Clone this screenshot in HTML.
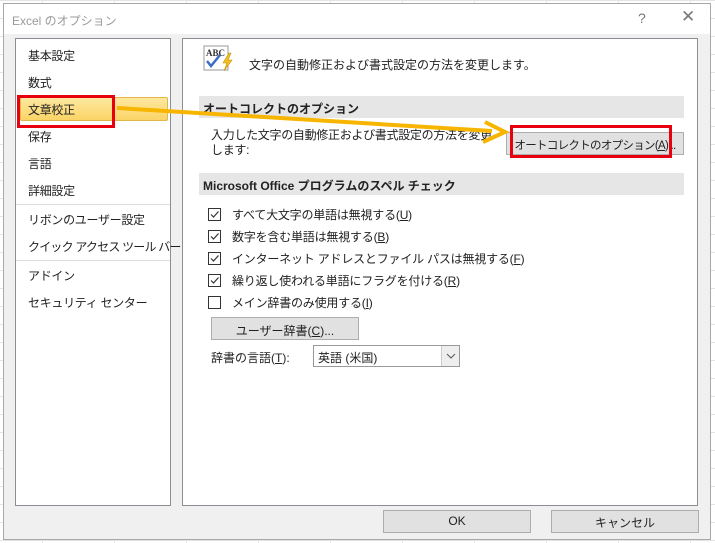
<!DOCTYPE html>
<html><head><meta charset="utf-8"><style>
*{box-sizing:border-box;margin:0;padding:0}
body{width:715px;height:543px;overflow:hidden;background:#fff;position:relative;font-family:"Liberation Sans","Noto Sans CJK JP",sans-serif;font-size:12px;color:#222}
.grid{position:absolute;inset:0;background-image:linear-gradient(#e3e3e3 1px,transparent 1px),linear-gradient(90deg,#e3e3e3 1px,transparent 1px);background-size:72px 18px;background-position:-30px 0}
.dlg{position:absolute;left:3px;top:3px;width:708px;height:537px;background:#f0f0f0;border:1px solid #a8a8a8}
.title{position:absolute;left:0;top:0;right:0;height:30px;background:#fff;color:#9a9a9a;font-size:12px;padding:8px 0 0 8px}
.abs{position:absolute;white-space:nowrap}
.panel{position:absolute;background:#fff;border:1px solid #8a8f96}
.nav div{position:absolute;left:12px;font-size:12px;white-space:nowrap;letter-spacing:-0.3px}
.hdr{position:absolute;left:16px;width:485px;height:22px;background:#e6e6e6;font-weight:bold;font-size:12px;padding:4px 0 0 4px;white-space:nowrap}
.btn{position:absolute;background:#e1e1e1;border:1px solid #adadad;text-align:center;font-size:12px;white-space:nowrap}
.cb{position:absolute;left:25px;font-size:12px}
.cb svg{position:absolute;left:0;top:2px}
.cb span.t{position:absolute;left:24px;top:0;white-space:nowrap;letter-spacing:-0.2px}
u{text-decoration:underline}
</style></head><body>
<div class="grid"></div>
<div class="dlg">
 <div class="title">Excel のオプション</div>
 <div class="abs" style="left:634px;top:6px;color:#777;font-size:14px">?</div>
 <div class="abs" style="left:677px;top:3px;color:#777;font-size:17px">✕</div>
 <div class="panel nav" style="left:11px;top:34px;width:156px;height:468px">
  <div style="top:8px">基本設定</div>
  <div style="top:35px">数式</div>
  <div style="left:4px;top:58px;width:148px;height:24px;background:linear-gradient(#fde8a0,#fbd466);border:1px solid #e0b84a;border-radius:2px"></div>
  <div style="top:62px">文章校正</div>
  <div style="top:89px">保存</div>
  <div style="top:116px">言語</div>
  <div style="top:143px">詳細設定</div>
  <div style="left:0;top:165px;width:154px;height:1px;background:#ddd"></div>
  <div style="top:172px">リボンのユーザー設定</div>
  <div style="top:199px;letter-spacing:-0.8px">クイック アクセス ツール バー</div>
  <div style="left:0;top:221px;width:154px;height:1px;background:#ddd"></div>
  <div style="top:228px">アドイン</div>
  <div style="top:255px">セキュリティ センター</div>
 </div>
 <div class="abs" style="left:13px;top:91px;width:98px;height:33px;border:3px solid #e8000f"></div>
 <div class="panel" style="left:178px;top:34px;width:516px;height:468px">
  <svg class="abs" style="left:20px;top:6px" width="34" height="30" viewBox="0 0 34 30">
   <rect x="1" y="1" width="24" height="24" fill="#fff" stroke="#999"/>
   <text x="3" y="11" font-family="Liberation Serif" font-size="9" font-weight="bold" fill="#333">ABC</text>
   <path d="M4 16l4 5 9-11" stroke="#3a6cc8" stroke-width="2.5" fill="none"/>
   <path d="M26 8l-6 10h4l-3 8 8-11h-4l3-7z" fill="#f2c020" stroke="#c89000" stroke-width=".6"/>
  </svg>
  <div class="abs" style="left:66px;top:17px;font-size:12px">文字の自動修正および書式設定の方法を変更します。</div>
  <div class="hdr" style="top:57px">オートコレクトのオプション</div>
  <div class="abs" style="left:28px;top:89px;font-size:12px;line-height:15px;letter-spacing:-0.3px">入力した文字の自動修正および書式設定の方法を変更<br>します:</div>
  <div class="btn" style="left:323px;top:93px;width:178px;height:23px;padding-top:4px;font-size:11.5px;letter-spacing:-0.7px">オートコレクトのオプション(<u>A</u>)...</div>
  <div class="hdr" style="top:134px">Microsoft Office プログラムのスペル チェック</div>
  <div class="cb" style="top:167px"><svg width="13" height="13"><rect x=".5" y=".5" width="12" height="12" fill="#fff" stroke="#333"/><path d="M3 6.5l2.5 2.5 5-5.5" stroke="#333" stroke-width="1.2" fill="none"/></svg><span class="t">すべて大文字の単語は無視する(<u>U</u>)</span></div>
  <div class="cb" style="top:189px"><svg width="13" height="13"><rect x=".5" y=".5" width="12" height="12" fill="#fff" stroke="#333"/><path d="M3 6.5l2.5 2.5 5-5.5" stroke="#333" stroke-width="1.2" fill="none"/></svg><span class="t">数字を含む単語は無視する(<u>B</u>)</span></div>
  <div class="cb" style="top:211px"><svg width="13" height="13"><rect x=".5" y=".5" width="12" height="12" fill="#fff" stroke="#333"/><path d="M3 6.5l2.5 2.5 5-5.5" stroke="#333" stroke-width="1.2" fill="none"/></svg><span class="t">インターネット アドレスとファイル パスは無視する(<u>F</u>)</span></div>
  <div class="cb" style="top:233px"><svg width="13" height="13"><rect x=".5" y=".5" width="12" height="12" fill="#fff" stroke="#333"/><path d="M3 6.5l2.5 2.5 5-5.5" stroke="#333" stroke-width="1.2" fill="none"/></svg><span class="t">繰り返し使われる単語にフラグを付ける(<u>R</u>)</span></div>
  <div class="cb" style="top:255px"><svg width="13" height="13"><rect x=".5" y=".5" width="12" height="12" fill="#fff" stroke="#333"/></svg><span class="t">メイン辞書のみ使用する(<u>I</u>)</span></div>
  <div class="btn" style="left:28px;top:278px;width:148px;height:23px;padding-top:4px">ユーザー辞書(<u>C</u>)...</div>
  <div class="abs" style="left:28px;top:310px;font-size:12px">辞書の言語(<u>T</u>):</div>
  <div class="abs" style="left:130px;top:306px;width:147px;height:22px;border:1px solid #999;background:#fff;padding:3px 0 0 4px;font-size:12px">英語 (米国)
   <div class="abs" style="right:0;top:0;width:18px;height:20px;background:#eee;border-left:1px solid #ccc"><svg width="18" height="20"><path d="M5 8l4 4 4-4" stroke="#555" fill="none"/></svg></div></div>
 </div>
 <div class="btn" style="left:379px;top:506px;width:148px;height:23px;padding-top:3px">OK</div>
 <div class="btn" style="left:547px;top:506px;width:148px;height:23px;padding-top:3px">キャンセル</div>
 <div class="abs" style="left:506px;top:121px;width:162px;height:33px;border:3px solid #e8000f"></div>
</div>
<svg class="abs" style="left:0;top:0" width="715" height="543">
 <path d="M117 108 L492 131" stroke="#f7b500" stroke-width="4"/>
 <path d="M485 122 L505 132 L483 142" stroke="#f7b500" stroke-width="4" fill="none"/>
</svg>
</body></html>
